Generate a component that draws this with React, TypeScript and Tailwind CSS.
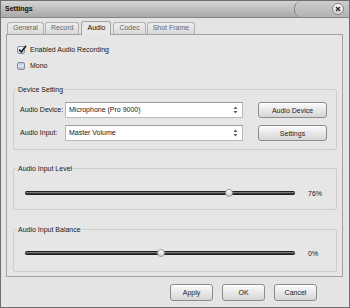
import React from 'react';

const tabs = ['General', 'Record', 'Audio', 'Codec', 'Shot Frame'];

const Checkbox = ({ checked, label }: { checked: boolean; label: string }) => (
  <div className="flex items-center h-[8px] pl-[10px] gap-[5px]">
    {checked ? (
      <div className="relative w-[8px] h-[8px] rounded-[2px] border border-[#7f8ea3] bg-gradient-to-b from-[#f4f6f9] to-[#cfd6e0]">
        <svg className="absolute -top-[2px] left-0" width="9" height="9" viewBox="0 0 9 9">
          <path d="M1.2 4.6 L3.4 7 L8 0.8" stroke="#1d1d1d" strokeWidth="1.6" fill="none" />
        </svg>
      </div>
    ) : (
      <div className="w-[8px] h-[8px] rounded-[2px] border border-[#7f8ea3] bg-gradient-to-b from-[#b9c3d1] via-[#e3e8ef] to-[#aeb9c8]" />
    )}
    <span>{label}</span>
  </div>
);

const Select = ({ value }: { value: string }) => (
  <div className="flex items-center justify-between w-[178px] h-[16px] bg-white border border-[#b9b9b9] border-t-[#9c9c9c] pl-[3px] pr-[4px]">
    <span>{value}</span>
    <svg width="5" height="8" viewBox="0 0 5 8">
      <path d="M0.5 3 L2.5 0.5 L4.5 3 Z" fill="#5a5a5a" />
      <path d="M0.5 5 L2.5 7.5 L4.5 5 Z" fill="#5a5a5a" />
    </svg>
  </div>
);

const Button = ({ label, size }: { label: string; size: string }) => (
  <button className={`${size} rounded-[3px] border border-[#8c8c8c] bg-gradient-to-b from-[#fbfbfb] to-[#d6d6d6] text-[7px] text-[#1a1a1a] leading-none shadow-[inset_0_1px_0_#ffffff]`}>
    {label}
  </button>
);

const Group = ({ title, h, children }: { title: string; h: string; children: React.ReactNode }) => (
  <div className={`relative ml-[6px] w-[324px] ${h} border border-[#cdcdcd] rounded-[2px]`}>
    <span className="absolute -top-[5px] left-[3px] px-px bg-[#e6e6e6] leading-[9px]">{title}</span>
    {children}
  </div>
);

const Slider = ({ pct, value }: { pct: number; value: string }) => (
  <div className="flex items-center h-[10px]">
    <div className="relative ml-[11px] w-[270px] h-[4px] rounded-full bg-[#383838] border-y border-[#222222]">
      <div className="absolute left-[1px] right-[1px] top-0 h-px bg-[#7a7a7a]" />
      <div
        className="absolute top-1/2 -translate-x-1/2 -translate-y-1/2 w-[8px] h-[8px] rounded-full border border-[#9a9a9a] bg-gradient-to-b from-[#ffffff] to-[#cfcfcf]"
        style={{ left: `${pct}%` }}
      />
    </div>
    <span className="ml-[13px] mt-[2px]">{value}</span>
  </div>
);

export default function App() {
  return (
    <div className="w-[350px] h-[308px] bg-[#e4e4e4] border border-[#6f6f6f] flex flex-col text-[7px] text-[#161616] font-['Liberation_Sans',Arial,sans-serif] overflow-hidden">
      {/* title bar */}
      <div className="flex items-stretch h-[17px] bg-gradient-to-b from-[#d4d4d4] to-[#a9a9a9] border-b border-[#858585]">
        <div className="flex-1 flex items-center pl-[4px] font-bold text-[7px] text-[#0e0e0e]">Settings</div>
        <div className="w-[55px] flex items-center justify-end pr-[5px] rounded-l-[7px] border-l border-[#838383] bg-gradient-to-b from-[#cdcdcd] to-[#b2b2b2]">
          <div className="w-[12px] h-[12px] rounded-full border border-[#858585] bg-gradient-to-b from-[#ffffff] to-[#d0d0d0] flex items-center justify-center">
            <svg width="6" height="6" viewBox="0 0 6 6">
              <path d="M1 1 L5 5 M5 1 L1 5" stroke="#2a2a2a" strokeWidth="1.4" />
            </svg>
          </div>
        </div>
      </div>

      {/* tabs */}
      <div className="flex items-end h-[13px] mt-[3px] ml-[6px] gap-px relative z-10">
        {tabs.map((t) =>
          t === 'Audio' ? (
            <div key={t} className="h-[14px] -mb-px mx-px px-[5px] flex items-center rounded-t-[3px] border border-b-0 border-[#a3a3a3] bg-[#e8e8e8] text-[#111]">
              {t}
            </div>
          ) : (
            <div key={t} className="h-[12px] px-[5px] flex items-center rounded-t-[3px] border border-b-0 border-[#b0b0b0] bg-gradient-to-b from-[#eeeeee] to-[#d9d9d9] text-[#666]">
              {t}
            </div>
          )
        )}
      </div>

      {/* panel */}
      <div className="ml-[5px] w-[337px] h-[243px] border border-[#a3a3a3] bg-[#e6e6e6] flex flex-col">
        <div className="mt-[11px]">
          <Checkbox checked label="Enabled Audio Recording" />
        </div>
        <div className="mt-[8px]">
          <Checkbox checked={false} label="Mono" />
        </div>

        <div className="mt-[19px]">
          <Group title="Device Setting" h="h-[61px]">
            <div className="flex flex-col gap-[7px] pt-[12px] pl-[6px]">
              <div className="flex items-center">
                <span className="w-[45px]">Audio Device:</span>
                <Select value="Microphone (Pro 9000)" />
                <div className="ml-[15px]">
                  <Button label="Audio Device" size="w-[69px] h-[16px]" />
                </div>
              </div>
              <div className="flex items-center">
                <span className="w-[45px]">Audio Input:</span>
                <Select value="Master Volume" />
                <div className="ml-[15px]">
                  <Button label="Settings" size="w-[69px] h-[16px]" />
                </div>
              </div>
            </div>
          </Group>
        </div>

        <div className="mt-[18px]">
          <Group title="Audio Input Level" h="h-[42px]">
            <div className="pt-[19px]">
              <Slider pct={75.7} value="76%" />
            </div>
          </Group>
        </div>

        <div className="mt-[19px]">
          <Group title="Audio Input Balance" h="h-[43px]">
            <div className="pt-[18px]">
              <Slider pct={50.2} value="0%" />
            </div>
          </Group>
        </div>
      </div>

      {/* footer */}
      <div className="flex gap-[9px] ml-[169px] mt-[7px]">
        <Button label="Apply" size="w-[43px] h-[17px]" />
        <Button label="OK" size="w-[43px] h-[17px]" />
        <Button label="Cancel" size="w-[43px] h-[17px]" />
      </div>
    </div>
  );
}
